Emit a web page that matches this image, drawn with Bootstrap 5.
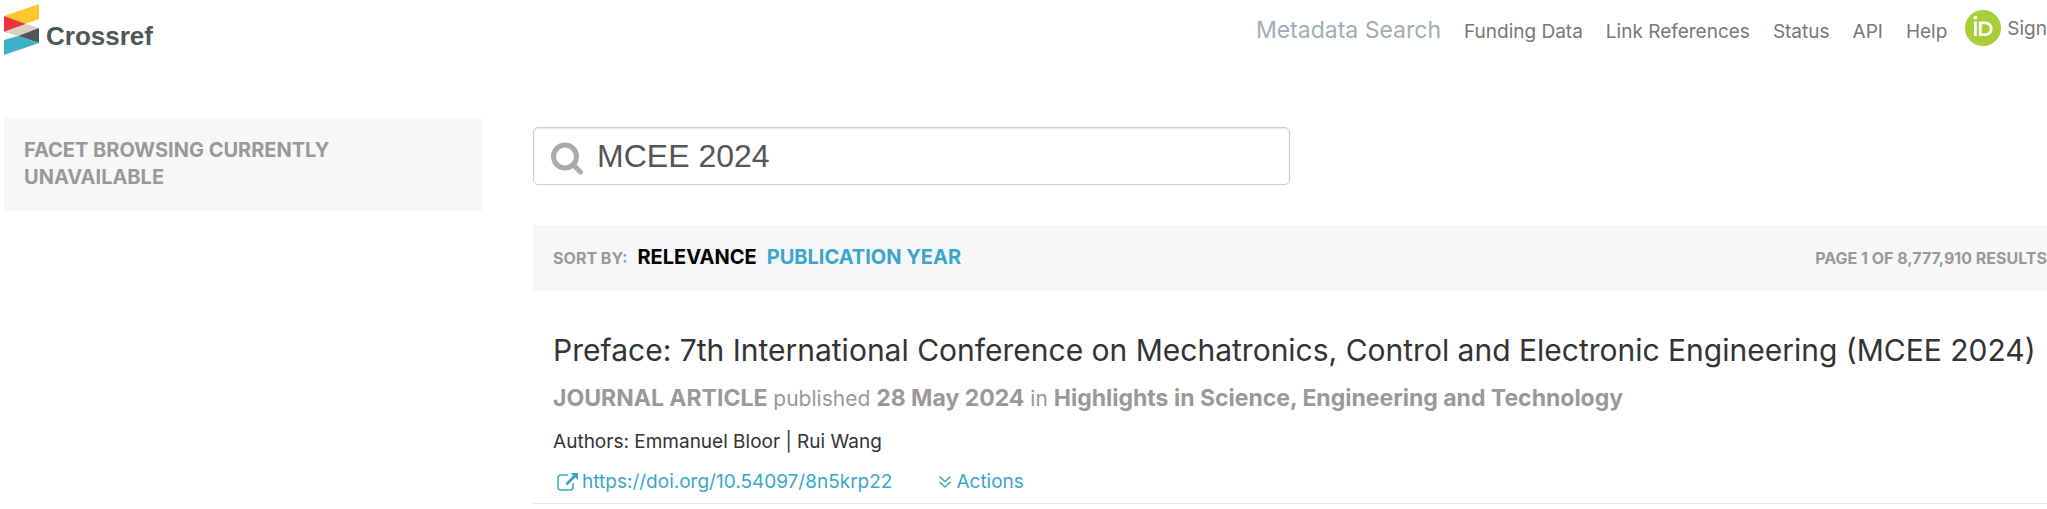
<!DOCTYPE html>
<html lang="en">
<head>
<meta charset="utf-8">
<meta name="viewport" content="width=device-width, initial-scale=1">
<title>Crossref Metadata Search</title>
<link rel="stylesheet" href="https://cdn.jsdelivr.net/npm/bootstrap@5.3.0/dist/css/bootstrap.min.css">
<style>
  body { font-family: Inter, "Liberation Sans", sans-serif; font-size: 19px; line-height: 27px; color: #333; background: #fff; overflow-x: hidden; }
  a { color: #3aa6cd; text-decoration: none; }
  .site-header { padding: 0 0 0 4px; height: 60px; }
  .brand-logo { width: 152px; height: 52px; margin-top: 4px; }
  .brand-logo text { font-family: "Liberation Sans", sans-serif; font-weight: 700; }
  .top-links { gap: 23px; padding-top: 17px; }
  .top-links a { color: #777; }
  .top-links .current-link { color: #a3acb8; font-size: 23px; }
  .signin { gap: 6px; padding-top: 10px; margin-left: 18px; }
  .signin a { color: #777; }
  .page-grid { display: grid; grid-template-columns: minmax(0, 6fr) minmax(0, 19fr); column-gap: 51px; padding: 58px 0 0 4px; align-items: start; }
  .panel { background: #f7f7f7; color: #999; font-weight: 700; }
  .facets { padding: 19px 140px 20px 20px; font-size: 20px; }
  .search-wrap { width: 50%; margin-top: 9px; }
  .search-wrap svg { left: 17px; top: 14px; }
  .search-wrap .form-control { height: 58px; padding: 0 12px 0 63px; border: 1px solid #ccc; border-radius: 5px; color: #555; font-family: "Liberation Sans", sans-serif; font-size: 32px; box-shadow: inset 0 1px 2px rgba(0,0,0,.1); }
  .sort-bar { margin-top: 40px; padding: 0 0 0 20px; height: 66px; font-size: 16px; }
  .sort-options { gap: 10px; }
  .sort-bar a { font-size: 20px; }
  .sort-bar .active { color: #000; }
  .result { padding: 39px 0 8px 20px; border-bottom: 1px solid #e8e8e8; }
  .result h2 { font-size: 30px; line-height: 40px; font-weight: 400; margin: 0; }
  .result .source { font-size: 21px; line-height: 32px; color: #999; margin: 12px 0 0; }
  .result .source b { font-size: 23px; font-weight: 700; }
  .result .authors { margin: 13px 0 0; }
  .result .links { margin-top: 13px; gap: 46px; }
</style>
</head>
<body>
<header class="site-header d-flex justify-content-between align-items-start">
  <a href="#" aria-label="Crossref">
    <svg class="brand-logo d-block" viewBox="0 0 152 52">
      <path fill="#ffc72c" d="M0 12 35 0v15L21 20z"/>
      <path fill="#ef3340" d="M0 12 22 20 0 28z"/>
      <path fill="#d8d2c4" d="M0 28 22 20 35 24 14 32z"/>
      <path fill="#4f5858" d="M14 32 35 24v15z"/>
      <path fill="#3eb1c8" d="M0 36 14 32l21 7L0 51z"/>
      <text x="42" y="41" font-size="26" fill="#4f5858">Crossref</text>
    </svg>
  </a>
  <nav class="d-flex align-items-start">
    <div class="top-links d-flex align-items-baseline">
      <a class="current-link" href="#">Metadata Search</a>
      <a href="#">Funding Data</a>
      <a href="#">Link References</a>
      <a href="#">Status</a>
      <a href="#">API</a>
      <a href="#">Help</a>
    </div>
    <div class="signin d-flex align-items-center">
      <svg width="36" height="36" viewBox="0 0 36 36" aria-hidden="true">
        <circle cx="18" cy="18" r="18" fill="#a6ce39"/>
        <g fill="none" stroke="#fff" stroke-width="2.8"><path d="M10.4 11.5V26"/><path d="M15.3 12.8h5a5.9 5.9 0 0 1 0 11.9h-5z"/></g>
        <circle cx="10.4" cy="7.6" r="1.9" fill="#fff"/>
      </svg>
      <a href="#">Sign</a>
    </div>
  </nav>
</header>
<main class="page-grid">
  <aside class="panel facets">FACET BROWSING CURRENTLY UNAVAILABLE</aside>
  <section>
    <form class="search-wrap position-relative">
      <svg class="position-absolute" width="34" height="34" viewBox="0 0 34 34" fill="none" stroke="#aaa" aria-hidden="true"><circle cx="15" cy="15.500" r="11.5" stroke-width="5"/><path d="m24 24.500 6.500 6.500" stroke-width="5" stroke-linecap="round"/></svg>
      <input class="form-control" type="text" value="MCEE 2024" aria-label="Search">
    </form>
    <div class="panel sort-bar d-flex justify-content-between align-items-center">
      <div class="sort-options d-flex align-items-baseline"><span>SORT BY:</span><a class="active" href="#">RELEVANCE</a><a href="#">PUBLICATION YEAR</a></div>
      <span>PAGE 1 OF 8,777,910 RESULTS</span>
    </div>
    <article class="result">
      <h2>Preface: 7th International Conference on Mechatronics, Control and Electronic Engineering (MCEE 2024)</h2>
      <p class="source"><b>JOURNAL ARTICLE</b> published <b>28 May 2024</b> in <b>Highlights in Science, Engineering and Technology</b></p>
      <p class="authors">Authors: Emmanuel Bloor | Rui Wang</p>
      <div class="links d-flex">
        <a class="d-flex align-items-center" href="#"><svg class="ms-1 me-1" width="21" height="18" viewBox="0 0 21 18" aria-hidden="true"><path d="M11 2H4a3 3 0 0 0-3 3v9a3 3 0 0 0 3 3h9a3 3 0 0 0 3-3v-4" fill="none" stroke="currentColor" stroke-width="1.500"/><path d="M13.500 0H21v7l-2.600-2.400-8 7.700-1.900-1.900 7.700-7.800z" fill="currentColor"/></svg>https://doi.org/10.54097/8n5krp22</a>
        <a class="d-flex align-items-center" href="#"><svg class="me-1" width="14" height="14" viewBox="0 0 14 14" fill="none" stroke="currentColor" stroke-width="1.600" aria-hidden="true"><path d="m1.500 1.500 5.500 5 5.500-5M1.500 7l5.500 5 5.500-5"/></svg>Actions</a>
      </div>
    </article>
  </section>
</main>
<script src="https://cdn.jsdelivr.net/npm/bootstrap@5.3.0/dist/js/bootstrap.bundle.min.js"></script>
</body>
</html>
